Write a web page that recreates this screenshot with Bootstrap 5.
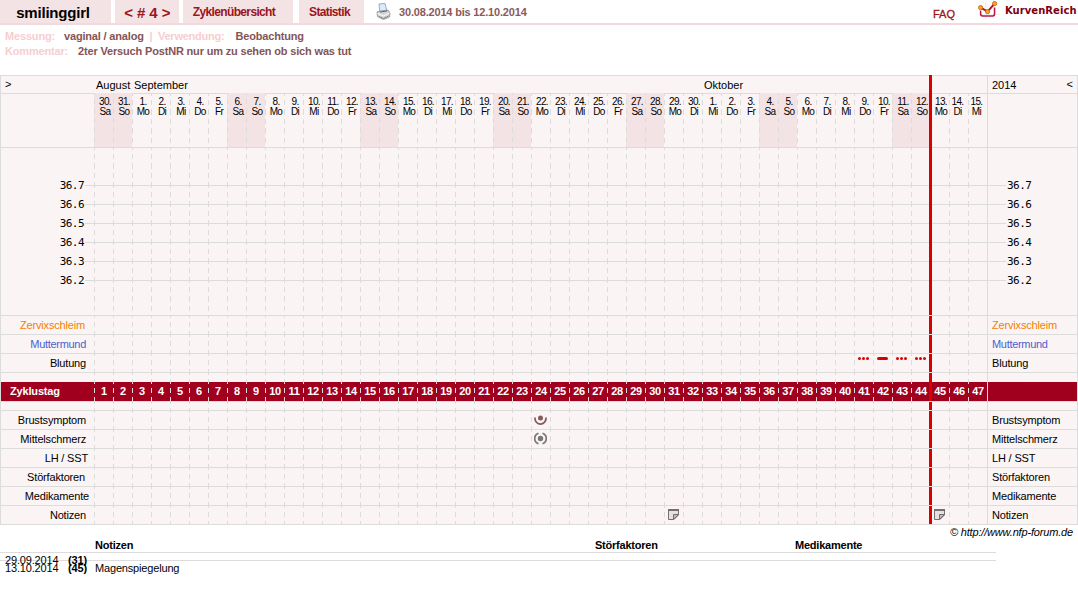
<!DOCTYPE html>
<html lang="de">
<head>
<meta charset="utf-8">
<title>KurvenReich</title>
<link href="https://cdn.jsdelivr.net/npm/bootstrap@5.3.0/dist/css/bootstrap.min.css" rel="stylesheet">
<style>
body{font:11px/14px "Liberation Sans",Arial,sans-serif;letter-spacing:-.17px;color:#000;background:#fff;min-height:604px}
.topbar{height:25px;border-bottom:2px solid #f3d9dc;font-weight:700;color:#9d1420;white-space:nowrap}
.tab{background:#f4e3e5;height:23px;line-height:25px;font-size:12px;letter-spacing:-.65px;text-align:center;flex:none}
.tab.user{width:111px;font-size:15px;color:#000;padding-right:5px;line-height:26px;letter-spacing:-.2px}
.tab.cyc{width:64px;font-size:15px;line-height:25px;letter-spacing:-.7px;word-spacing:1.2px}
.range{color:#8a5a5c;font-size:11px;line-height:25px;letter-spacing:-.18px}
.brandname{font:700 10px/22px "DejaVu Sans",sans-serif;color:#7d0010;width:73px;letter-spacing:.05px}
.meta{font-weight:700;line-height:15px;color:#855456;padding:4px 0 0 5px;height:50px;white-space:pre}
.meta b{color:#f8cdd0}
.chart{width:1078px;background:#faf4f4;border:solid #dcdcdc;border-width:0 1px 1px;white-space:nowrap}
.line{display:flex;border-top:1px solid #dcdcdc}
.lhs{width:93px;flex:none;text-align:right;padding-right:8px}
.days{width:893px;flex:none;display:flex}
.rhs{width:90px;flex:none;border-left:1px solid #dcdcdc;padding-left:4px}
.cell{width:19px;flex:none;position:relative;text-align:center}
.cell::before{content:"";position:absolute;left:0;top:0;bottom:0;width:1px;background:repeating-linear-gradient(#dcdcdc 0 2px,transparent 2px 6px,#dcdcdc 6px 11px,transparent 11px 15px,#dcdcdc 15px 19px)}
.today::after{content:"";position:absolute;left:-1px;top:0;bottom:0;width:3px;background:#d90000}
.today.ext::after{top:-1px;z-index:2}
.r18{height:18px}.r19{height:19px}
.r19 .lhs,.r19 .rhs{line-height:19px}
.months{letter-spacing:0}
.months .cell::before{display:none}
.months .cell{text-align:left;line-height:18px}
.months .cell span{position:relative;left:2px}
.dates{height:54px}
.dates .cell{font-size:10px;line-height:10px;letter-spacing:-.6px;padding:3px 0 0 3px}
.dates .cell.weekend{background:#f4e3e5;margin-top:-1px;padding-top:4px}
.dates .cell.narrow{padding:3px 2px 0 0}
.temps{height:168px;position:relative}
.scale{position:absolute;top:37px;left:84px;right:71px}
.scale div{height:19px;border-top:1px solid #dcdcdc}
.tempfont{font:11px/19px "DejaVu Sans Mono",monospace;letter-spacing:-.55px;padding-top:28px}
.tempfont.lhs{padding-right:10px}.tempfont.rhs{padding-left:19px}
.cycle{background:#a0001e;color:#fff;font-weight:700;height:19px;border:0;line-height:19px}
.cycle .cell{padding-left:1px;letter-spacing:-.3px}
.cell svg{position:absolute;left:3px;top:2px;z-index:1}
.notes{width:996px}
.noterow{display:flex;border-top:1px solid #dcdcdc;height:8px;padding-left:5px;line-height:15px}
</style>
</head>
<body>
<header class="topbar d-flex">
 <div class="tab user">smilinggirl</div>
 <div class="tab cyc ms-1">&lt; # 4 &gt;</div>
 <div class="tab ms-1 pe-2" style="width:110px">Zyklenübersicht</div>
 <div class="tab" style="width:65px;margin-left:6px;padding-right:4px">Statistik</div>
 <svg class="flex-shrink-0" style="margin-left:12px;margin-top:3px" width="16" height="18" viewBox="0 0 16 18"><path d="M3 1l6-.5 2 8-7 1z" fill="#dcecff" stroke="#8faad0"/><path d="M1 9l4-1 7-1 2 3-.5 4-6 2.500-6-3z" fill="#d4d4d4" stroke="#888" stroke-width=".8"/><path d="M1.500 10.500l6 2.500 6-3" fill="none" stroke="#fff"/><path d="M4 9l7-1" stroke="#666"/><path d="M3 13.500l4.500 2 5-2.500" fill="none" stroke="#888"/></svg>
 <div class="range" style="margin-left:7px">30.08.2014 bis 12.10.2014</div>
 <div class="ms-auto fw-normal" style="font-size:11px;letter-spacing:0;line-height:28px;-webkit-text-stroke:.3px">FAQ</div>
 <svg class="flex-shrink-0" style="margin-left:22px" width="24" height="20" viewBox="-.6 -.6 24 20"><path d="M0 14h22M8 2v17M16 0v18" stroke="#eee"/><path d="M3 10v3q0 2.500 2 2.500h10q2 0 2-2.500V7" fill="none" stroke="#bd1648" stroke-width="1.500"/><path d="M3 7l7 4 7-8" fill="none" stroke="#b80d31" stroke-width="2"/><g fill="#ffa31a" stroke="#b5601a" stroke-width=".8"><circle cx="3" cy="7" r="2.100"/><circle cx="10" cy="11" r="2.100"/><circle cx="17" cy="3" r="2.100"/></g></svg>
 <div class="brandname" style="margin-left:4px">KurvenReich</div>
</header>
<div class="meta"><div><b>Messung:</b><span style="margin-left:9px">vaginal / analog</span><b style="letter-spacing:-.23px">  |  Verwendung:</b><span style="margin-left:11px">Beobachtung</span></div><div><b>Kommentar:</b><span style="margin-left:10px">2ter Versuch PostNR nur um zu sehen ob sich was tut</span></div></div>
<main class="chart" id="chart"></main>
<div class="text-end fst-italic" style="padding-right:5px;line-height:15px;height:13px">© http://www.nfp-forum.de</div>
<section class="notes">
 <div class="d-flex fw-bold" style="height:14px;padding-left:95px;line-height:15px;letter-spacing:-.22px"><div style="width:500px">Notizen</div><div style="width:200px">Störfaktoren</div><div>Medikamente</div></div>
 <div class="noterow"><span style="width:63px">29.09.2014</span><b>(31)</b></div>
 <div class="noterow"><span style="width:63px">13.10.2014</span><b style="width:27px">(45)</b><span>Magenspiegelung</span></div>
</section>
<script>
const N=47, wd=['Sa','So','Mo','Di','Mi','Do','Fr'];
const days=(fn,ext)=>'<div class="days">'+Array.from({length:N},(_,i)=>{
  const c=fn(i)||{};
  return `<div class="cell ${i==44?'today':''} ${ext?'ext':''} ${c.cls||''}">${c.t||''}</div>`}).join('')+'</div>';
const row=(cls,l,r,fn,o={})=>`<div class="line ${cls}"><div class="lhs ${o.lc||''}" ${o.ls?`style="${o.ls}"`:''}>${l}</div>${days(fn||(()=>0),o.ext)}<div class="rhs ${o.rc||''}" ${o.rs?`style="${o.rs}"`:''}>${r}</div>${o.extra||''}</div>`;
const dots='<svg width="13" height="6" viewBox="0 0 13 6" fill="#d90000"><circle cx="2.500" cy="2.500" r="1.500"/><circle cx="6.500" cy="2.500" r="1.500"/><circle cx="10.500" cy="2.500" r="1.500"/></svg>';
const bar='<svg width="13" height="6"><rect x="1" y="1" width="11" height="3" rx="1.500" fill="#d90000"/></svg>';
const breast='<svg width="13" height="13"><circle cx="6.500" cy="5" r="2.500" fill="#885a5d"/><path d="M.9 4.500c0 8.800 11.200 8.800 11.200 0" fill="none" stroke="#885a5d" stroke-width="1.800"/></svg>';
const mid='<svg width="13" height="13"><circle cx="6.500" cy="6.500" r="2.700" fill="#777"/><path d="M4.500 1.200a5.600 5.600 0 0 0 0 10.600M8.500 1.200a5.600 5.600 0 0 1 0 10.600" fill="none" stroke="#777" stroke-width="1.700"/></svg>';
const note='<svg width="12" height="12" style="left:4px;top:3px"><path d="M.5 1h10v5l-4.500 4.500H.5z" fill="#e6e0e2" stroke="#776c70"/><path d="M0 1h11" stroke="#776c70" stroke-width="2"/><path d="M5.500 10.500v-5h5z" fill="#bbb" stroke="#776c70"/></svg>';
const mon={0:'August',2:'September',32:'Oktober'};
const temps=['36.7','36.6','36.5','36.4','36.3','36.2'].map(t=>`<div>${t}</div>`).join('');
let h='';
h+=row('r18 months','&gt;','<span>2014</span><span style="padding-right:4px;line-height:16px">&lt;</span>',i=>({t:mon[i]?`<span>${mon[i]}</span>`:''}),{ext:1,ls:'text-align:left;padding-left:4px;line-height:16px',rc:'d-flex justify-content-between',rs:'line-height:18px'});
h+=row('dates','','',i=>{const d=i<2?30+i:i<32?i-1:i-31;return{t:d+'.<br>'+wd[i%7],cls:i>44?'narrow':i%7<2?'weekend':''}},{ext:1});
h+=row('temps',temps,temps,null,{ext:1,lc:'tempfont',rc:'tempfont',extra:'<div class="scale"><div></div><div></div><div></div><div></div><div></div><div></div></div>'});
h+=row('r19','<span style="color:#f57f00">Zervixschleim</span>','<span style="color:#f57f00">Zervixschleim</span>',null,{ls:'padding-right:9px'});
h+=row('r19','<span style="color:#4a5fd0;letter-spacing:-.3px">Muttermund</span>','<span style="color:#4a5fd0;letter-spacing:-.3px">Muttermund</span>');
h+=row('r19','Blutung','Blutung',i=>({t:i==41?bar:i>=40&&i<44?dots:''}));
h+=row('','','',null,{ls:'height:9px'});
h+=row('cycle','Zyklustag','',i=>({t:i+1}),{ls:'text-align:left;padding-left:9px'});
h+=row('','','',null,{ls:'height:8px'});
[['Brustsymptom',8,23,breast],['Mittelschmerz',8,23,mid],['LH / SST',6],['Störfaktoren',9],['Medikamente',5],['Notizen',8,30,note,44]].forEach(a=>h+=row('r19',a[0],a[0],i=>({t:(i===a[2]||i===a[4])?a[3]:''}),{ls:`padding-right:${a[1]}px`}));
document.getElementById('chart').innerHTML=h;
</script>
<script src="https://cdn.jsdelivr.net/npm/bootstrap@5.3.0/dist/js/bootstrap.bundle.min.js"></script>
</body>
</html>
